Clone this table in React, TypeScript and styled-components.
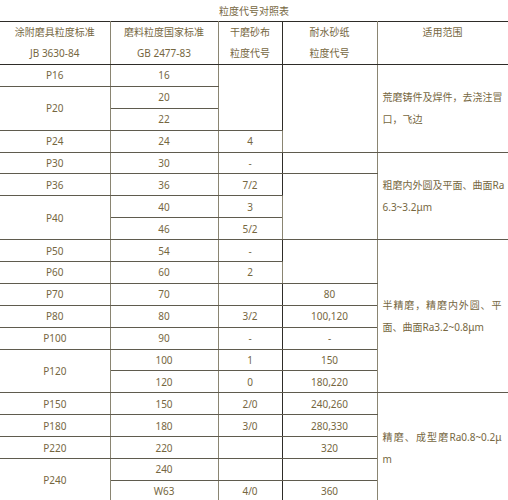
import React from "react";
import styled, { createGlobalStyle } from "styled-components";

const Global = createGlobalStyle`
  html, body { margin: 0; padding: 0; background: #fff; }
  body { font-family: "Noto Sans", "Noto Sans CJK SC", sans-serif; }
`;

const GRAY = "#8a8572";
const DARK = "#2e2c28";

const Page = styled.div`
  width: 508px;
  height: 500px;
  overflow: hidden;
  background: #fff;
  color: #76673f;
`;

const Title = styled.div`
  height: 21px;
  line-height: 21px;
  text-align: center;
  font-size: 10px;
  font-family: "Noto Sans CJK SC", sans-serif;
`;

const Table = styled.table`
  width: 508px;
  table-layout: fixed;
  border-collapse: collapse;
  font-size: 10px;
  border-top: 1px solid ${DARK};
`;

const Row = styled.tr<{ $h?: number }>`
  height: ${(p) => p.$h ?? 21.9}px;
`;

const Th = styled.th<{ $first?: boolean; $darkRight?: boolean }>`
  padding: 0;
  font-weight: 400;
  vertical-align: top;
  text-align: center;
  border: 1px solid ${GRAY};
  border-top-color: ${DARK};
  border-bottom-color: ${DARK};
  ${(p) => (p.$first ? "border-left: none;" : "")}
  ${(p) => (p.$darkRight ? `border-right-color: ${DARK};` : "")}
`;

const HeadLine = styled.div`
  height: 21px;
  line-height: 21px;
  white-space: nowrap;
`;

const Td = styled.td<{ $first?: boolean; $darkRight?: boolean; $darkTop?: boolean }>`
  padding: 0;
  text-align: center;
  vertical-align: middle;
  white-space: nowrap;
  border: 1px solid ${GRAY};
  border-top-color: #5f5b4e;
  border-bottom-color: #5f5b4e;
  ${(p) => (p.$first ? "border-left: none;" : "")}
  ${(p) => (p.$darkRight ? `border-right-color: ${DARK};` : "")}
  ${(p) => (p.$darkTop ? `border-top: 1.5px solid ${DARK};` : "")}
`;

const DescCell = styled.td<{ $darkTop?: boolean }>`
  padding: 0 6px 0 5px;
  vertical-align: middle;
  text-align: left;
  border: 1px solid ${GRAY};
  border-top-color: #5f5b4e;
  border-bottom-color: #5f5b4e;
  ${(p) => (p.$darkTop ? `border-top: 1.5px solid ${DARK};` : "")}
`;

const DescLine = styled.div<{ $justify?: boolean }>`
  width: 119px;
  height: 22px;
  line-height: 22px;
  white-space: nowrap;
  text-align: ${(p) => (p.$justify ? "justify" : "left")};
  text-align-last: ${(p) => (p.$justify ? "justify" : "left")};
  text-justify: inter-character;
`;

const Desc: React.FC<{ lines: string[] }> = ({ lines }) => (
  <>
    {lines.map((l, i) => (
      <DescLine key={i} $justify={i < lines.length - 1}>
        {l}
      </DescLine>
    ))}
  </>
);

export default function App() {
  return (
    <Page>
      <Global />
      <Title>粒度代号对照表</Title>
      <Table>
        <colgroup>
          <col style={{ width: 110 }} />
          <col style={{ width: 108 }} />
          <col style={{ width: 64 }} />
          <col style={{ width: 95 }} />
          <col style={{ width: 131 }} />
        </colgroup>
        <thead>
          <Row $h={42}>
            <Th $first>
              <HeadLine>涂附磨具粒度标准</HeadLine>
              <HeadLine>JB 3630-84</HeadLine>
            </Th>
            <Th>
              <HeadLine>磨料粒度国家标准</HeadLine>
              <HeadLine>GB 2477-83</HeadLine>
            </Th>
            <Th $darkRight>
              <HeadLine>干磨砂布</HeadLine>
              <HeadLine>粒度代号</HeadLine>
            </Th>
            <Th>
              <HeadLine>耐水砂纸</HeadLine>
              <HeadLine>粒度代号</HeadLine>
            </Th>
            <Th>
              <HeadLine>适用范围</HeadLine>
            </Th>
          </Row>
        </thead>
        <tbody>
          <Row>
            <Td $first>P16</Td>
            <Td>16</Td>
            <Td rowSpan={3} $darkRight />
            <Td rowSpan={4} />
            <DescCell rowSpan={4}>
              <Desc lines={["荒磨铸件及焊件，去浇注冒", "口，飞边"]} />
            </DescCell>
          </Row>
          <Row>
            <Td $first rowSpan={2}>P20</Td>
            <Td>20</Td>
          </Row>
          <Row>
            <Td>22</Td>
          </Row>
          <Row>
            <Td $first>P24</Td>
            <Td>24</Td>
            <Td $darkRight $darkTop>4</Td>
          </Row>
          <Row>
            <Td $first>P30</Td>
            <Td>30</Td>
            <Td $darkRight>-</Td>
            <Td />
            <DescCell rowSpan={4}>
              <Desc lines={["粗磨内外圆及平面、曲面Ra", "6.3~3.2μm"]} />
            </DescCell>
          </Row>
          <Row>
            <Td $first>P36</Td>
            <Td>36</Td>
            <Td $darkRight>7/2</Td>
            <Td rowSpan={3} />
          </Row>
          <Row>
            <Td $first rowSpan={2}>P40</Td>
            <Td>40</Td>
            <Td $darkRight>3</Td>
          </Row>
          <Row>
            <Td $darkTop>46</Td>
            <Td $darkRight $darkTop>5/2</Td>
          </Row>
          <Row>
            <Td $first>P50</Td>
            <Td>54</Td>
            <Td $darkRight>-</Td>
            <Td rowSpan={2} />
            <DescCell rowSpan={7}>
              <Desc lines={["半精磨，精磨内外圆、平", "面、曲面Ra3.2~0.8μm"]} />
            </DescCell>
          </Row>
          <Row>
            <Td $first>P60</Td>
            <Td>60</Td>
            <Td $darkRight>2</Td>
          </Row>
          <Row>
            <Td $first>P70</Td>
            <Td>70</Td>
            <Td $darkRight />
            <Td>80</Td>
          </Row>
          <Row>
            <Td $first $darkTop>P80</Td>
            <Td $darkTop>80</Td>
            <Td $darkRight $darkTop>3/2</Td>
            <Td $darkTop>100,120</Td>
          </Row>
          <Row>
            <Td $first>P100</Td>
            <Td>90</Td>
            <Td $darkRight>-</Td>
            <Td>-</Td>
          </Row>
          <Row>
            <Td $first rowSpan={2}>P120</Td>
            <Td>100</Td>
            <Td $darkRight>1</Td>
            <Td>150</Td>
          </Row>
          <Row>
            <Td>120</Td>
            <Td $darkRight>0</Td>
            <Td>180,220</Td>
          </Row>
          <Row>
            <Td $first $darkTop>P150</Td>
            <Td $darkTop>150</Td>
            <Td $darkRight $darkTop>2/0</Td>
            <Td $darkTop>240,260</Td>
            <DescCell rowSpan={5} $darkTop>
              <Desc lines={["精磨、成型磨Ra0.8~0.2μ", "m"]} />
            </DescCell>
          </Row>
          <Row>
            <Td $first>P180</Td>
            <Td>180</Td>
            <Td $darkRight>3/0</Td>
            <Td>280,330</Td>
          </Row>
          <Row>
            <Td $first>P220</Td>
            <Td>220</Td>
            <Td $darkRight />
            <Td>320</Td>
          </Row>
          <Row>
            <Td $first rowSpan={2}>P240</Td>
            <Td>240</Td>
            <Td $darkRight />
            <Td />
          </Row>
          <Row>
            <Td $darkTop>W63</Td>
            <Td $darkRight $darkTop>4/0</Td>
            <Td $darkTop>360</Td>
          </Row>
        </tbody>
      </Table>
    </Page>
  );
}
